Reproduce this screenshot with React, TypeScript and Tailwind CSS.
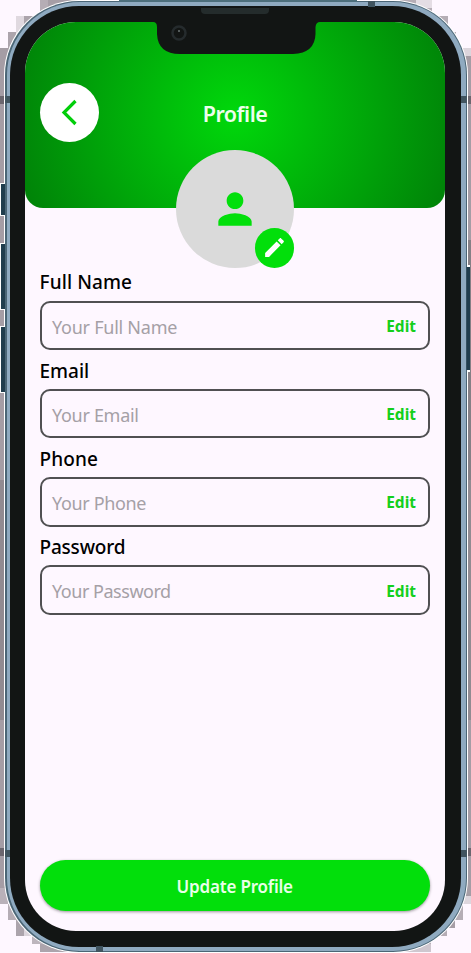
import React from "react";

const fields = [
  { label: "Full Name", hint: "Your Full Name", labelCls: "tracking-[0.1px]", hintCls: "tracking-[-0.25px]" },
  { label: "Email", hint: "Your Email", labelCls: "tracking-[0px]", hintCls: "tracking-[-0.3px]" },
  { label: "Phone", hint: "Your Phone", labelCls: "tracking-[0.1px]", hintCls: "tracking-[-0.35px]" },
  { label: "Password", hint: "Your Password", labelCls: "tracking-[-0.2px]", hintCls: "tracking-[-0.47px]" },
];

// Stepped shadow squares around the rounded corners: x, y, width, height, colour
const steps: [number, number, number, number, string][] = [
  [0, 48, 8, 432, "#a59da5"], [0, 480, 8, 240, "#918b91"], [0, 720, 8, 184, "#a59da5"],
  [463, 48, 8, 192, "#a59da5"], [463, 240, 8, 240, "#858085"], [463, 480, 8, 240, "#918b91"], [463, 720, 8, 176, "#a59da5"],
  [8, 32, 16, 24, "#aca4ac"], [16, 16, 24, 24, "#e0d9e0"], [24, 16, 24, 24, "#aca4ac"], [40, 0, 40, 16, "#b5adb5"], [48, 0, 60, 8, "#a69ea6"],
  [400, 0, 24, 8, "#b5adb5"], [416, 0, 16, 8, "#e4dde4"], [424, 8, 8, 8, "#b5adb5"], [432, 16, 16, 8, "#b5adb5"], [440, 24, 8, 24, "#a69ea6"], [448, 32, 8, 24, "#b5adb5"], [456, 48, 7, 24, "#b5adb5"], [463, 48, 8, 8, "#dcd5dc"],
  [0, 888, 8, 16, "#b9b1b9"], [8, 904, 16, 16, "#b5adb5"], [16, 912, 24, 24, "#aca4ac"], [24, 928, 24, 8, "#dcd5dc"], [32, 936, 24, 8, "#bdb5bd"], [40, 944, 45, 8, "#aca4ac"],
  [463, 896, 8, 8, "#ddd6dd"], [455, 904, 8, 16, "#b5adb5"], [447, 912, 8, 16, "#a69ea6"], [439, 920, 8, 16, "#b5adb5"], [423, 936, 8, 8, "#b5adb5"], [400, 944, 31, 8, "#cfc7cf"],
];

function Surroundings() {
  return (
    <svg className="absolute inset-0" width="471" height="953" shapeRendering="crispEdges" aria-hidden="true">
      {steps.map(([x, y, w, h, c], i) => (
        <rect key={i} x={x} y={y} width={w} height={h} fill={c} />
      ))}
      <g fill="#6b666e">
        <rect x="0" y="96" width="4" height="8" />
        <rect x="468" y="96" width="3" height="8" />
        <rect x="0" y="848" width="4" height="8" />
        <rect x="468" y="848" width="3" height="8" />
      </g>
      <g fill="#fff">
        <rect x="0" y="183" width="5" height="33" />
        <rect x="0" y="243" width="5" height="67" />
        <rect x="0" y="326" width="5" height="67" />
        <rect x="467" y="265" width="3" height="107" />
      </g>
    </svg>
  );
}

// Keys, antenna bands, speaker and camera drawn on the phone body
function Hardware() {
  return (
    <svg className="pointer-events-none absolute inset-0" width="471" height="953" aria-hidden="true">
      <g fill="#203d4d">
        <rect x="1" y="184" width="4" height="31" />
        <rect x="1" y="244" width="4" height="65" />
        <rect x="1" y="327" width="4" height="65" />
        <rect x="466.500" y="267" width="3.500" height="103" />
      </g>
      <g fill="#40545f">
        <rect x="5" y="96" width="5" height="7" />
        <rect x="461" y="96" width="6" height="7" />
        <rect x="5" y="850" width="5" height="7" />
        <rect x="461" y="850" width="6" height="7" />
        <rect x="368" y="1" width="7" height="6" />
        <rect x="96" y="946" width="7" height="6" />
      </g>
      <rect x="119" y="0" width="238" height="2" fill="#4d6f7c" />
      <path d="M150 20V22H153Q157 22 157 27V34Q158 54 180 54H293Q315 53 315.500 34V27Q316 22 320 22H324V20Z" fill="#121514" />
      <path d="M201 8H269V10Q269 14 265 14H205Q201 14 201 10Z" fill="#242c2c" />
      <circle cx="179" cy="33" r="6.500" fill="#121514" stroke="#252b2d" strokeWidth="2.500" />
      <circle cx="179" cy="31" r="1" fill="#6c7475" />
    </svg>
  );
}

export default function App() {
  return (
    <div className="relative h-[953px] w-[471px] overflow-hidden bg-[#fef7ff] font-['Noto_Sans','Open_Sans',sans-serif]">
      <Surroundings />
      <div className="relative ml-[4px] h-[953px] w-[464px] rounded-[75px] bg-white p-px">
        <div className="h-full rounded-[74px] bg-[#4b6676] p-px pl-[1.500px]">
          <div className="h-full rounded-[73px] bg-[#8faac0] py-[4px] pl-[3.500px] pr-[5px]">
            <div className="h-full rounded-[69px] bg-[#121514] pb-[16.500px] pl-[15px] pr-[16px] pt-[16px]">
              <main className="flex h-full flex-col overflow-hidden rounded-[51px] bg-[#fef7ff]">
                <header className="flex h-[186.400px] shrink-0 flex-col rounded-b-[18px] bg-[radial-gradient(circle_222px_at_50%_50%,#00d80b_0%,#008408_100%)]">
                  <div className="grid grid-cols-[59px_1fr_59px] items-center px-[14.500px] pt-[60.500px]">
                    <button className="flex size-[59px] items-center justify-center rounded-full bg-white" aria-label="Back">
                      <svg width="59" height="59" fill="none" stroke="#02ce0b" strokeWidth="3.200">
                        <path d="M35.500 18L24 29.500L35.500 41" />
                      </svg>
                    </button>
                    <h1 className="mt-[3px] text-center text-[21.500px] font-semibold leading-[30px] tracking-[-0.5px] text-[#edffed]">Profile</h1>
                  </div>
                  <div className="relative mt-[8px] flex size-[118px] shrink-0 items-center justify-center self-center rounded-full bg-[#dadada]">
                    <svg width="50" height="50" viewBox="0 0 24 24" fill="#02df0b">
                      <path d="M12 12c2.210 0 4-1.790 4-4s-1.790-4-4-4-4 1.790-4 4 1.790 4 4 4zm0 2c-2.670 0-8 1.340-8 4v2h16v-2c0-2.660-5.330-4-8-4z" />
                    </svg>
                    <div className="absolute bottom-0 right-0 flex size-[39.500px] items-center justify-center rounded-full bg-[#02df0b]">
                      <svg width="25" height="25" viewBox="0 0 24 24" fill="#fff">
                        <path d="M3 17.250V21h3.750L17.810 9.940l-3.750-3.750L3 17.250zM20.710 7.040c.39-.39.39-1.020 0-1.410l-2.340-2.340c-.39-.39-1.020-.39-1.410 0l-1.830 1.830 3.750 3.750 1.830-1.830z" />
                      </svg>
                    </div>
                  </div>
                </header>
                <section className="flex flex-col pl-[14.500px] pr-[15px] pt-[59px]">
                  {fields.map((f) => (
                    <div key={f.label} className="flex h-[88.200px] flex-col">
                      <label className={"h-[33.300px] text-[19px] font-medium leading-[30px] text-black " + f.labelCls}>{f.label}</label>
                      <div className="flex h-[49.500px] items-center justify-between rounded-[10px] border-2 border-[#505052] pl-[10.500px] pr-[12px]">
                        <span className={"mt-[2.500px] text-[18px] leading-[26px] text-[#a5a0a6] " + f.hintCls}>{f.hint}</span>
                        <span className="mt-[1px] text-[15.500px] font-bold leading-[22px] text-[#14cf1c]">Edit</span>
                      </div>
                    </div>
                  ))}
                </section>
                <button className="mb-[19.500px] ml-[14.500px] mr-[15px] mt-auto h-[51px] rounded-full bg-[#02df0b] pt-[2px] text-[17px] font-semibold leading-[26px] tracking-[-0.2px] text-[#e8ffe8] shadow-[0_1px_3px_rgba(0,0,0,0.4)]">
                  Update Profile
                </button>
              </main>
            </div>
          </div>
        </div>
      </div>
      <Hardware />
    </div>
  );
}
